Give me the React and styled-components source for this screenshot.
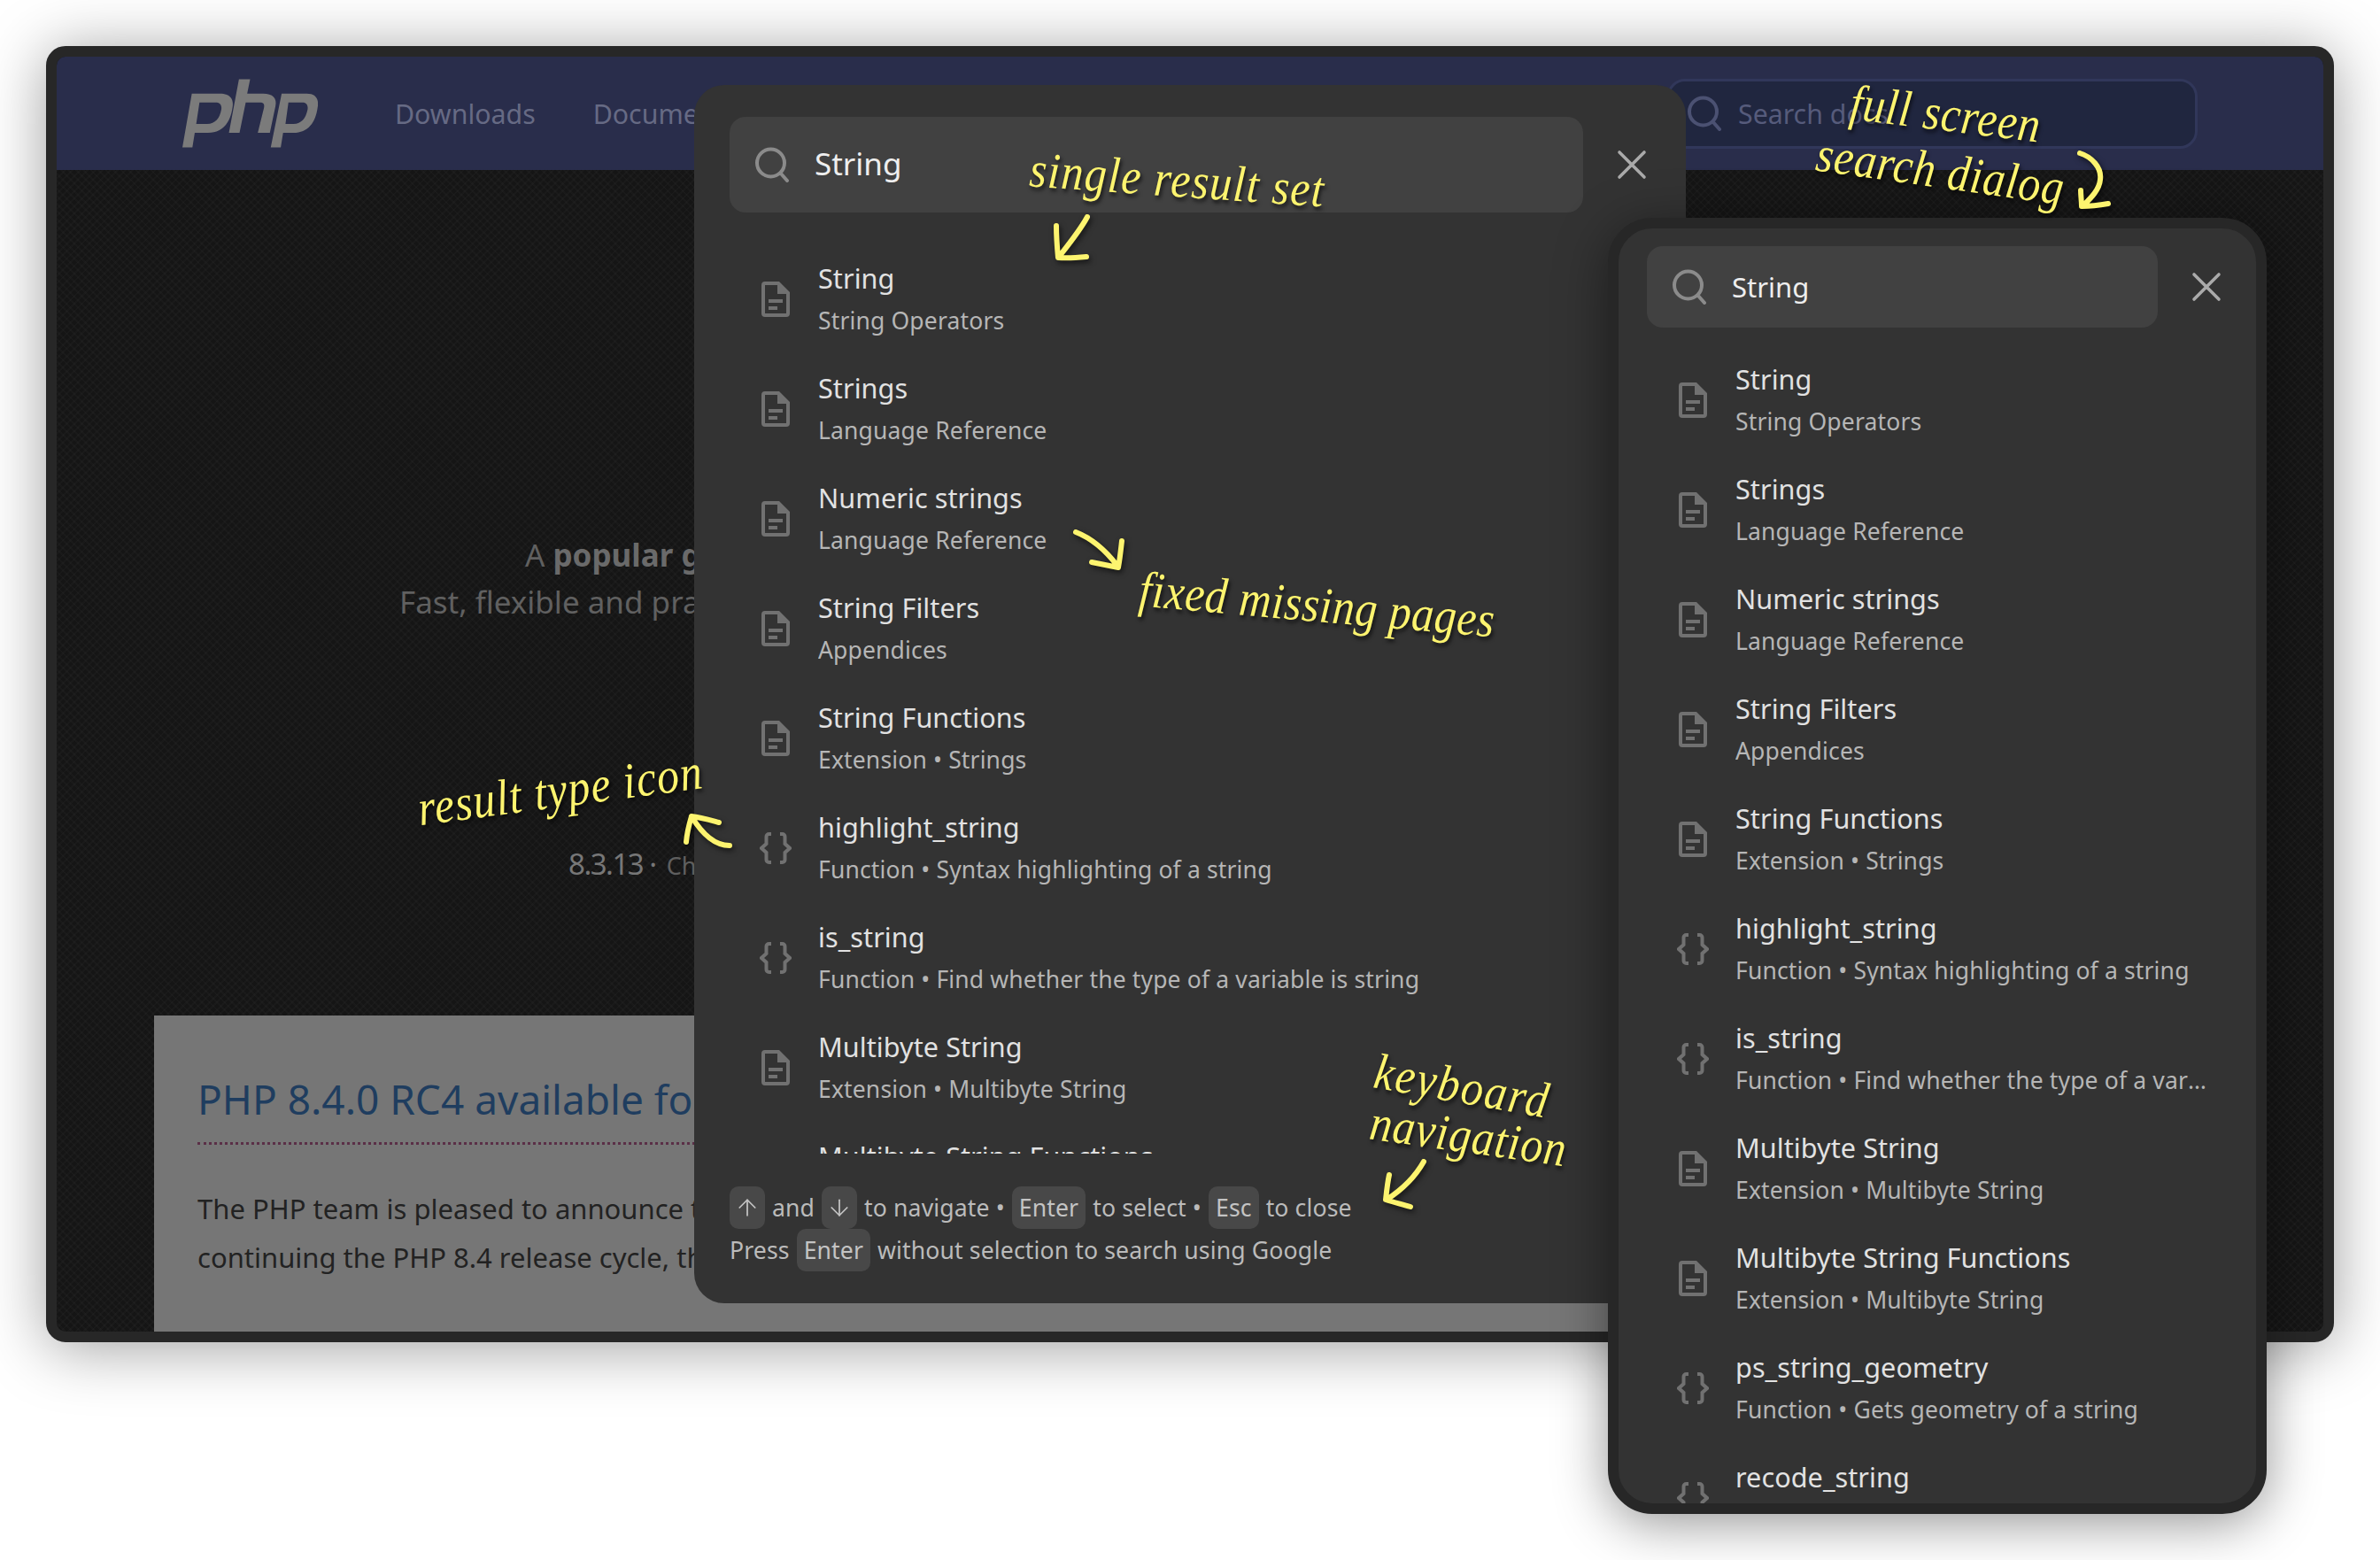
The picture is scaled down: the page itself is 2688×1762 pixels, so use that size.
import React from 'react'
import styled, { createGlobalStyle } from 'styled-components'
import { ArrowUp, ArrowDown } from 'lucide-react'

const UI_FONT = '"Noto Sans", "Open Sans", sans-serif'
const HAND_FONT = '"Liberation Serif", serif'

const GlobalStyle = createGlobalStyle`
  html, body { margin: 0; background: #fff; overflow: hidden; }
  * { box-sizing: border-box; }
`

const Stage = styled.div`
  position: relative;
  width: 2688px;
  height: 1762px;
  padding: 52px;
  font-family: ${UI_FONT};
  background: #fff;
`

const Browser = styled.div`
  width: 2584px;
  height: 1464px;
  border: 12px solid #272727;
  border-radius: 22px;
  overflow: hidden;
  display: flex;
  flex-direction: column;
  background-color: #151515;
  background-image:
    repeating-linear-gradient(45deg, rgba(255,255,255,.018) 0 2px, transparent 2px 6px),
    repeating-linear-gradient(-45deg, rgba(255,255,255,.018) 0 2px, transparent 2px 6px);
  box-shadow: 0 6px 70px rgba(0,0,0,.38);
`

const Nav = styled.header`
  flex: none;
  height: 128px;
  display: flex;
  align-items: center;
  padding: 0 142px;
  background: #292d4b;
`

const Logo = styled.svg`
  width: 153px;
  height: 78px;
  margin-right: 87px;
  fill: #7b7b7b;
`

const NavLink = styled.span`
  font-size: 30.3px;
  color: #666a84;
  margin-right: 65px;
  white-space: nowrap;
`

const NavSearch = styled.div`
  margin-left: auto;
  width: 599px;
  height: 79px;
  display: flex;
  align-items: center;
  gap: 18px;
  padding-left: 19px;
  border: 3px solid #31375a;
  border-radius: 20px;
  background: #20263f;
  font-size: 30.3px;
  color: #565b7b;
`

const Main = styled.main`
  flex: 1;
  min-height: 0;
  display: flex;
  flex-direction: column;
  padding-top: 408px;
`

const HeroLine = styled.div`
  margin-left: ${p => p.$indent}px;
  font-size: 35px;
  line-height: 53px;
  color: #606060;
  white-space: nowrap;
  b { font-weight: 700; color: #6a6a6a; }
`

const Version = styled.div`
  margin: 247px 0 0 578px;
  font-size: 33px;
  line-height: 46px;
  letter-spacing: -1.5px;
  color: #777;
  white-space: nowrap;
  small { margin-left: 5px; font-size: 27px; letter-spacing: 0; color: #5f5f5f; }
`

const Card = styled.section`
  flex: none;
  margin: 146px 0 0 110px;
  width: 2340px;
  height: 380px;
  padding: 61px 49px;
  background: #767676;
`

const CardTitle = styled.h2`
  margin: 0 0 45px;
  padding-bottom: 16px;
  font-size: 46px;
  line-height: 66px;
  font-weight: 400;
  color: #1f3d5f;
  border-bottom: 3px dotted #5a2f47;
  white-space: nowrap;
`

const CardText = styled.p`
  margin: 0;
  font-size: 31px;
  line-height: 55px;
  color: #222;
  white-space: nowrap;
`

const Dialog = styled.div`
  position: absolute;
  left: 784px;
  top: 96px;
  width: 1120px;
  height: 1376px;
  display: flex;
  flex-direction: column;
  overflow: hidden;
  padding: 36px 0;
  border-radius: 34px;
  background: #333;
`

const FullDialog = styled(Dialog)`
  left: 1816px;
  top: 246px;
  width: 744px;
  height: 1464px;
  padding: 20px 0 0;
  border: 12px solid #272727;
  border-radius: 50px;
  box-shadow: 0 10px 60px rgba(0,0,0,.42);
`

const SearchRow = styled.div`
  flex: none;
  display: flex;
  align-items: center;
  padding: ${p => (p.$full ? '0 38px 0 32px' : '0 43px 0 40px')};
`

const SearchBox = styled.div`
  flex: 1;
  height: ${p => (p.$full ? 92 : 108)}px;
  display: flex;
  align-items: center;
  gap: 28px;
  padding: 0 0 ${p => (p.$full ? 0 : 3)}px 28px;
  border-radius: 18px;
  background: #414141;
  font-size: ${p => (p.$full ? 31 : 35)}px;
  color: #eee;
  svg { margin-bottom: ${p => (p.$full ? 0 : -3)}px; }
`

const SearchGlyph = styled.svg`
  flex: none;
  width: 40px;
  height: 40px;
  fill: none;
  stroke: ${p => p.$color};
  stroke-width: 4;
  stroke-linecap: round;
`

const CloseGlyph = styled.svg`
  flex: none;
  width: 36px;
  height: 36px;
  margin-left: 37px;
  fill: none;
  stroke: #aaa;
  stroke-width: 3.6;
  stroke-linecap: round;
`

const List = styled.div`
  flex: 1;
  min-height: 0;
  overflow: hidden;
  margin-top: ${p => (p.$full ? 20 : 36)}px;
  padding: 0 ${p => (p.$full ? 53 : 40)}px 0 ${p => (p.$full ? 32 : 40)}px;
`

const Row = styled.div`
  height: 124px;
  display: flex;
  align-items: center;
  gap: 28px;
  padding-left: 32px;
`

const IconSlot = styled.div`
  flex: none;
  width: 40px;
  height: 40px;
  display: flex;
  align-items: center;
  justify-content: center;
  svg { display: block; }
`

const RowText = styled.div`
  flex: 1;
  min-width: 0;
  padding-bottom: 2px;
`

const RowTitle = styled.div`
  font-size: 30.6px;
  line-height: 46px;
  letter-spacing: 0.06px;
  margin-bottom: 4px;
  color: #e2e2e2;
  white-space: nowrap;
`

const RowSub = styled.div`
  font-size: 26.5px;
  line-height: 42px;
  letter-spacing: 0.15px;
  color: #b6b6b6;
  white-space: nowrap;
  overflow: hidden;
  text-overflow: ellipsis;
`

const Footer = styled.footer`
  flex: none;
  margin-top: 37px;
  padding: 0 40px;
  font-size: 26.6px;
  line-height: 48px;
  letter-spacing: 0.12px;
  color: #bbb;
  white-space: nowrap;
`

const Kbd = styled.kbd`
  display: inline-flex;
  align-items: center;
  justify-content: center;
  height: 48px;
  min-width: 40px;
  margin: 0 8px 0 ${p => (p.$first ? 0 : 8)}px;
  padding: 0 ${p => (p.$arrow ? 5 : 8)}px;
  vertical-align: top;
  border-radius: 10px;
  background: #484848;
  font-family: inherit;
  font-size: inherit;
  color: #c4c4c4;
`

const Note = styled.span`
  position: absolute;
  left: ${p => p.$x}px;
  top: ${p => p.$y}px;
  transform: rotate(${p => p.$rot}deg) scale(1, 1.14);
  transform-origin: left center;
  font-family: ${HAND_FONT};
  font-style: italic;
  font-size: 50px;
  line-height: 1;
  letter-spacing: ${p => p.$spacing}px;
  color: #fdf46f;
  text-shadow: 2px 3px 4px rgba(0,0,0,.65);
  white-space: nowrap;
`

const ArrowMark = styled.svg`
  position: absolute;
  left: ${p => p.$x}px;
  top: ${p => p.$y}px;
  fill: none;
  stroke: #fdf46f;
  stroke-width: 6;
  stroke-linecap: round;
  stroke-linejoin: round;
  filter: drop-shadow(2px 3px 3px rgba(0,0,0,.6));
`

const RESULTS = [
  { kind: 'doc', title: 'String', sub: 'String Operators' },
  { kind: 'doc', title: 'Strings', sub: 'Language Reference' },
  { kind: 'doc', title: 'Numeric strings', sub: 'Language Reference' },
  { kind: 'doc', title: 'String Filters', sub: 'Appendices' },
  { kind: 'doc', title: 'String Functions', sub: 'Extension • Strings' },
  { kind: 'fn', title: 'highlight_string', sub: 'Function • Syntax highlighting of a string' },
  { kind: 'fn', title: 'is_string', sub: 'Function • Find whether the type of a variable is string' },
  { kind: 'doc', title: 'Multibyte String', sub: 'Extension • Multibyte String' },
  { kind: 'doc', title: 'Multibyte String Functions', sub: 'Extension • Multibyte String' },
  { kind: 'fn', title: 'ps_string_geometry', sub: 'Function • Gets geometry of a string' },
  { kind: 'fn', title: 'recode_string', sub: 'Function • Recode a string according to a recode request' },
]

const ARROWS = [
  { x: 1185, y: 238, w: 52, h: 62, d: 'M43 7C35 22 22 38 11 52M8 17C8 30 9 42 10 53C22 54 32 53 42 52' },
  { x: 2340, y: 165, w: 50, h: 76, d: 'M9 8C22 12 34 24 32 38C31 50 20 60 12 68M10 50C10 56 11 62 11 68C20 68 30 67 41 65' },
  { x: 1205, y: 592, w: 72, h: 56, d: 'M10 9C28 16 44 30 57 47M62 19C61 28 60 38 58 49C48 47 38 45 28 43' },
  { x: 765, y: 912, w: 70, h: 52, d: 'M59 43C42 43 28 30 16 10M10 39C11 28 13 20 16 10C26 11 36 14 47 17' },
  { x: 1555, y: 1304, w: 62, h: 66, d: 'M53 8C44 24 28 40 11 51M14 23C12 32 11 42 10 51C19 54 28 56 38 59' },
]

const PhpLogo = () => (
  <Logo viewBox="78 58 460 232">
    <path
      fillRule="evenodd"
      d="M110 107H205C238 107 254 124 248 155C241 205 215 240 165 240H120L112 290H78ZM136 137L125 210H162C190 210 205 190 210 162C213 145 205 137 190 137Z"
    />
    <path d="M270 58H308L298 107H352C385 107 400 122 394 150L375 240H334L355 155C358 142 352 137 342 137H293L272 240H236Z" />
    <path
      fillRule="evenodd"
      d="M415 107H500C530 107 543 124 537 155C530 205 505 240 455 240H420L412 290H378ZM438 137L428 210H455C483 210 497 190 503 162C506 145 498 137 485 137Z"
    />
  </Logo>
)

const SearchIcon = ({ color }) => (
  <SearchGlyph viewBox="0 0 40 40" $color={color}>
    <circle cx="18.5" cy="18" r="15.5" />
    <path d="M29.5 29.5L37 38" />
  </SearchGlyph>
)

const CloseIcon = () => (
  <CloseGlyph viewBox="0 0 36 36">
    <path d="M4 4L32 32M32 4L4 32" />
  </CloseGlyph>
)

const DocIcon = () => (
  <svg width="32" height="40" viewBox="0 0 32 40" fill="#717171">
    <path
      fillRule="evenodd"
      d="M4 0H20L32 12V36A4 4 0 0 1 28 40H4A4 4 0 0 1 0 36V4A4 4 0 0 1 4 0ZM4 4V36H28V14H18V4Z"
    />
    <rect x="8" y="20" width="16" height="4" />
    <rect x="8" y="28" width="10" height="4" />
  </svg>
)

const BraceIcon = () => (
  <svg width="36" height="36" viewBox="0 0 36 36" fill="none" stroke="#717171" strokeWidth="4">
    <path d="M13 2H10.500A3 3 0 0 0 7.500 5V13L2 18L7.500 23V31A3 3 0 0 0 10.500 34H13" />
    <path d="M23 2H25.500A3 3 0 0 1 28.500 5V13L34 18L28.500 23V31A3 3 0 0 1 25.500 34H23" />
  </svg>
)

const ResultRow = ({ kind, title, sub }) => (
  <Row>
    <IconSlot>{kind === 'doc' ? <DocIcon /> : <BraceIcon />}</IconSlot>
    <RowText>
      <RowTitle>{title}</RowTitle>
      <RowSub>{sub}</RowSub>
    </RowText>
  </Row>
)

const Results = ({ full }) => (
  <List $full={full}>
    {RESULTS.map(r => (
      <ResultRow key={r.title} {...r} />
    ))}
  </List>
)

const DialogHead = ({ full }) => (
  <SearchRow $full={full}>
    <SearchBox $full={full}>
      <SearchIcon color="#8b8b8b" />
      String
    </SearchBox>
    <CloseIcon />
  </SearchRow>
)

export default function App() {
  return (
    <Stage>
      <GlobalStyle />
      <Browser>
        <Nav>
          <PhpLogo />
          <NavLink>Downloads</NavLink>
          <NavLink>Documentation</NavLink>
          <NavSearch>
            <SearchIcon color="#4b5172" />
            Search docs
          </NavSearch>
        </Nav>
        <Main>
          <HeroLine $indent={529}>
            A <b>popular general-purpose scripting language</b> that is especially suited to web development.
          </HeroLine>
          <HeroLine $indent={387}>
            Fast, flexible and pragmatic, PHP powers everything from your blog to the most popular websites in the world.
          </HeroLine>
          <Version>
            8.3.13 · <small>Changelog</small>
          </Version>
          <Card>
            <CardTitle>PHP 8.4.0 RC4 available for testing</CardTitle>
            <CardText>The PHP team is pleased to announce the release of PHP 8.4.0, RC4.</CardText>
            <CardText>continuing the PHP 8.4 release cycle, the rough outline of which is specified.</CardText>
          </Card>
        </Main>
      </Browser>

      <Dialog>
        <DialogHead />
        <Results />
        <Footer>
          <div>
            <Kbd $first $arrow><ArrowUp size={30} strokeWidth={1.4} /></Kbd>and
            <Kbd $arrow><ArrowDown size={30} strokeWidth={1.4} /></Kbd>to navigate •
            <Kbd>Enter</Kbd>to select •
            <Kbd>Esc</Kbd>to close
          </div>
          <div>
            Press<Kbd>Enter</Kbd>without selection to search using Google
          </div>
        </Footer>
      </Dialog>

      <FullDialog>
        <DialogHead full />
        <Results full />
      </FullDialog>

      <Note $x={1163} $y={166} $rot={4} $spacing={1.3}>single result set</Note>
      <Note $x={2090} $y={90} $rot={7} $spacing={0.8}>full screen</Note>
      <Note $x={2052} $y={148} $rot={8} $spacing={0.8}>search dialog</Note>
      <Note $x={1287} $y={640} $rot={5} $spacing={0.6}>fixed missing pages</Note>
      <Note $x={472} $y={888} $rot={-7.5} $spacing={1.1}>result type icon</Note>
      <Note $x={1553} $y={1184} $rot={10} $spacing={2}>keyboard</Note>
      <Note $x={1548} $y={1242} $rot={8} $spacing={1}>navigation</Note>
      {ARROWS.map(a => (
        <ArrowMark key={a.d} $x={a.x} $y={a.y} width={a.w} height={a.h} viewBox={`0 0 ${a.w} ${a.h}`}>
          <path d={a.d} />
        </ArrowMark>
      ))}
    </Stage>
  )
}
